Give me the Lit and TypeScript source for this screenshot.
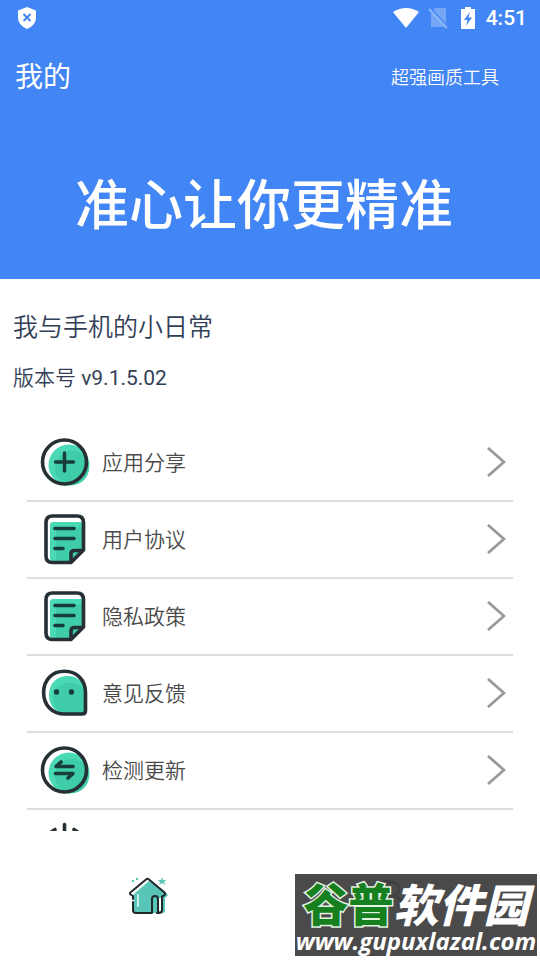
import { LitElement, html, css, svg, SVGTemplateResult } from "lit";
import { customElement, property } from "lit/decorators.js";

const disc = svg`
  <circle cx="29" cy="28" r="20.5" fill="#49d9b4"/>
  <circle cx="32" cy="31" r="17" fill="#3fcca8"/>
  <circle cx="24.5" cy="25" r="22" fill="none" stroke="#262f33" stroke-width="3.6"/>`;

const page = svg`
  <path d="M12 8H44V36L32 49H16Q10 49 10 44V10Z" fill="#49d9b4"/>
  <path d="M16 13H43V36L32 47H16Z" fill="#3fcca8"/>
  <path d="M27 48.500H12.500Q6 48.500 6 42V8.500Q6 2 12.500 2H37Q43.500 2 43.500 8.500V36L31 48.500H27M31 48V40Q31 36.500 34.500 36.500H43" fill="none" stroke="#262f33" stroke-width="3.6" stroke-linejoin="round"/>
  <path d="M15 14.500H34M15 24.500H34M15 34.500H23" stroke="#163d3a" stroke-width="3.6" stroke-linecap="round"/>`;

const icons: Record<string, SVGTemplateResult> = {
  share: svg`${disc}<path d="M24.500 16V34M15.500 25H33.500" stroke="#163d3a" stroke-width="3.4" stroke-linecap="round"/>`,
  page,
  feedback: svg`
    <path d="M28 8C39 8 46 16 46 28V42Q46 46 42 46H28C17 46 9 39 9 27S17 8 28 8Z" fill="#49d9b4"/>
    <path d="M29 15C38 15 46 20 46 29V42Q46 46 42 46H29C20 46 13 39 13 31S20 15 29 15Z" fill="#3fcca8"/>
    <path d="M24.500 3.300C37 3.300 45.500 12 45.500 25V42.500Q45.500 46 42 46H25C12 46 3.600 37 3.600 24.500S12 3.300 24.500 3.300Z" fill="none" stroke="#262f33" stroke-width="3.6"/>
    <circle cx="16.500" cy="24" r="2.700" fill="#163d3a"/><circle cx="31.500" cy="24" r="2.700" fill="#163d3a"/>`,
  update: svg`${disc}<path d="M33 21.500H16L21 17M15.500 28.500H33L28 33" fill="none" stroke="#163d3a" stroke-width="3.600" stroke-linecap="round" stroke-linejoin="round"/>`,
  power: svg`
    <circle cx="28" cy="30" r="18" fill="#49d9b4"/>
    <path d="M24.500 2.500V22M15 7.500A20 20 0 1 0 34 7.500" fill="none" stroke="#262f33" stroke-width="3.600" stroke-linecap="round"/>`,
};

@customElement("menu-row")
class MenuRow extends LitElement {
  @property() icon = "";
  @property() label = "";

  static styles = css`
    :host { display: block; flex: none; border-bottom: 2px solid #dedede; }
    .row {
      display: flex; align-items: center; gap: 12px;
      width: 100%; height: 75px; padding: 0 7px 0 13px;
      border: 0; background: none; color: #4a4a4a; text-align: left;
      font: 350 21px/30px Roboto, "Noto Sans CJK SC", sans-serif;
    }
    .icon { flex: none; width: 50px; height: 51px; }
    .label { flex: 1; }
    .arrow { flex: none; width: 20px; height: 32px; }
  `;

  render() {
    return html`<button class="row" aria-label=${this.label || "退出"}>
      <svg class="icon" viewBox="0 0 50 51">${icons[this.icon]}</svg>
      <span class="label">${this.label}</span>
      <svg class="arrow" viewBox="0 0 20 32"><path d="M2 1L18 15L2 29" fill="none" stroke="#999" stroke-width="2.800"/></svg>
    </button>`;
  }
}

@customElement("app-root")
class AppRoot extends LitElement {
  private rows = [
    { icon: "share", label: "应用分享" },
    { icon: "page", label: "用户协议" },
    { icon: "page", label: "隐私政策" },
    { icon: "feedback", label: "意见反馈" },
    { icon: "update", label: "检测更新" },
    { icon: "power", label: "" },
  ];

  static styles = css`
    :host {
      display: flex; flex-direction: column; position: relative;
      height: 100vh; overflow: hidden; background: #fff;
      font-family: Roboto, "Noto Sans CJK SC", sans-serif;
    }
    .hero { flex: none; background: #4285f4; color: #fff; padding-bottom: 32px; }
    .status { display: flex; align-items: center; height: 36px; padding: 0 13px 0 17px; }
    .shield { width: 20px; height: 24px; margin-right: auto; }
    .wifi { width: 26px; height: 22px; }
    .sim { width: 20px; height: 22px; margin-left: 9px; }
    .battery { width: 14px; height: 22px; margin-left: 13px; }
    .time { font-size: 21px; line-height: 24px; font-weight: 500; margin-left: 11px; }
    .bar { display: flex; align-items: center; justify-content: space-between; box-sizing: border-box; height: 80px; padding: 4px 41px 0 15px; }
    .title { margin: 0; font-size: 28px; line-height: 40px; font-weight: 400; }
    .app { font-size: 18px; line-height: 28px; font-weight: 350; }
    .slogan { margin: 51px 0 0; text-align: center; font-size: 54px; line-height: 80px; font-weight: 500; padding-right: 12px; white-space: nowrap; }
    .about { flex: none; padding: 30px 13px 31px; color: #333f57; }
    .name { margin: 0; font-size: 25px; line-height: 38px; font-weight: 350; }
    .version { margin: 15px 0 0; font-size: 21px; line-height: 32px; font-weight: 350; }
    .number { font-weight: 400; }
    .list { flex: 1; min-height: 0; margin: 0 27px; display: flex; flex-direction: column; overflow-y: auto; scrollbar-width: none; }
    .nav { flex: none; display: flex; height: 129px; padding: 0 27px; }
    .tab { flex: 1; display: flex; align-items: center; justify-content: center; border: 0; padding: 0; background: none; }
    .home { width: 40px; height: 38px; }
    .mark {
      position: absolute; right: 3px; bottom: 4px; width: 242px; height: 82px;
      background: #4a4a4a; color: #fff; text-decoration: none;
      display: flex; flex-direction: column; align-items: center; white-space: nowrap;
    }
    .ghost { position: absolute; left: 78px; top: 4px; width: 32px; height: 26px; }
    .brand { position: relative; font: italic 900 45px/46px "Noto Sans CJK SC", sans-serif; margin-top: 6px; }
    .green { font-style: normal; color: #16801f; -webkit-text-stroke: 3px #e4f4e4; paint-order: stroke fill; }
    .url { font: italic 700 24px/30px "Open Sans", sans-serif; }
  `;

  render() {
    return html`
      <header class="hero">
        <div class="status">
          <svg class="shield" viewBox="0 0 20 24"><path d="M10 1L19 4.500V12Q19 19 10 23Q1 19 1 12V4.500Z" fill="#fff"/><path d="M6.500 8L13.500 15M13.500 8L6.500 15" stroke="#4285f4" stroke-width="2"/></svg>
          <svg class="wifi" viewBox="0 0 26 22"><path d="M0 5Q13 -3 26 5L13 21Z" fill="#fff"/></svg>
          <svg class="sim" viewBox="0 0 20 22"><path d="M7 1H18V20H3V5Z" fill="#76a7f7"/><path d="M1 0L20 20" stroke="#4285f4" stroke-width="2"/><path d="M1 2L19 21" stroke="#8db6f8" stroke-width="2"/></svg>
          <svg class="battery" viewBox="0 0 14 22"><path d="M4 0H10V2H14V22H0V2H4Z" fill="#fff"/><path d="M9 5L3 13H6.500L5 19L11 10.500H7.500Z" fill="#4285f4"/></svg>
          <span class="time">4:51</span>
        </div>
        <div class="bar"><h1 class="title">我的</h1><span class="app">超强画质工具</span></div>
        <p class="slogan">准心让你更精准</p>
      </header>
      <section class="about">
        <h2 class="name">我与手机的小日常</h2>
        <p class="version">版本号 <span class="number">v9.1.5.02</span></p>
      </section>
      <main class="list">
        ${this.rows.map((r) => html`<menu-row .icon=${r.icon} .label=${r.label}></menu-row>`)}
      </main>
      <nav class="nav">
        <button class="tab" aria-label="首页">
          <svg class="home" viewBox="0 0 40 38">
            <path d="M6 16L20 4L35 14L39 18L36 21V34Q36 36 33 36H8Q5 36 5 33V17Z" fill="#59c5b9"/>
            <path d="M31 21V34" stroke="#fff" stroke-width="2"/>
            <path d="M4 25V33Q4 36 7 36H23M4 22V19L1.500 17.500Q0 16.500 2 15L17 2.500Q18.500 1 20 2.500L35.500 15.500Q37 17 35 18.500L33 19.500V33Q33 36 30 36H28M23 36V22Q23 19 26 19Q29 19 29 22V36" fill="none" stroke="#202829" stroke-width="2" stroke-linecap="round"/>
            <path d="M9 18V29" stroke="#c9efea" stroke-width="2" stroke-linecap="round"/>
            <path d="M33 0L34 3L37 3L35 5L36 8L33 6L30 8L31 5L29 3L32 3Z" fill="#59c5b9"/>
            <path d="M3 4H5M7 2H9" stroke="#59c5b9" stroke-width="2"/>
          </svg>
        </button>
        <button class="tab" aria-label="我的"></button>
      </nav>
      <a class="mark" href="#">
        <svg class="ghost" viewBox="0 0 32 26"><g fill="none" stroke="#3f3f3f" stroke-width="2"><path d="M4 12Q2 4 9 4Q13 1 17 4"/><circle cx="19" cy="11" r="7"/><path d="M9 25Q11 18 19 18Q27 18 29 25"/></g></svg>
        <span class="brand"><span class="green">谷普</span>软件园</span>
        <span class="url">www.gupuxlazal.com</span>
      </a>
    `;
  }
}
